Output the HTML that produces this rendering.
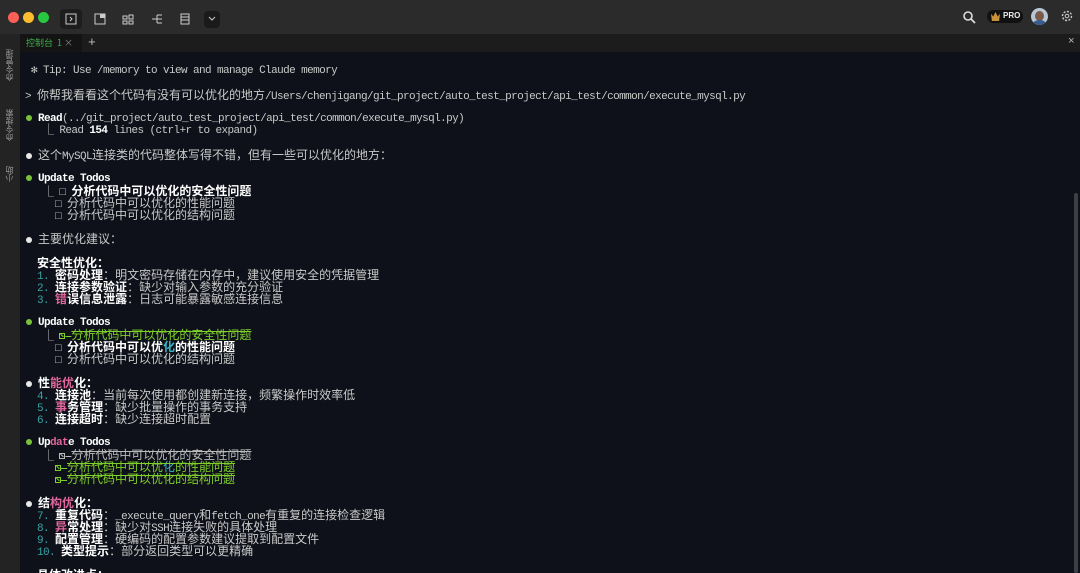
<!DOCTYPE html>
<html><head><meta charset="utf-8"><style>
*{margin:0;padding:0;box-sizing:border-box}
html,body{width:1080px;height:573px;overflow:hidden;background:#0e1119}
body{position:relative;font-family:"Liberation Mono","DejaVu Sans Mono",monospace;font-size:10px;color:#c9c9c9}
.top{position:absolute;left:0;top:0;width:1080px;height:34px;background:#2b2b2b}
.tl{position:absolute;top:12px;width:11px;height:11px;border-radius:50%}
.tb{position:absolute;top:9px;width:22px;height:20px;border-radius:4px}
.tabs{position:absolute;left:20px;top:34px;width:1060px;height:18px;background:#1c1c1c}
.side{position:absolute;left:0;top:34px;width:20px;height:539px;background:#232323}
.vt{position:absolute;left:4px;font-family:"Noto Sans CJK SC",sans-serif;font-size:8px;line-height:11px;color:#999;writing-mode:vertical-rl;transform:rotate(180deg)}
.term{position:absolute;left:25px;top:65px;line-height:12px;font-size:11px;letter-spacing:-0.6px}
.term div{height:12px;white-space:pre}
.c{font-family:"Noto Sans CJK SC",sans-serif;font-size:12px;line-height:12px;letter-spacing:0}
b{color:#fff;font-weight:bold}
.dot{display:inline-block;width:6px;height:6px;border-radius:50%;background:#e8e8e8;vertical-align:0px;margin:0 0 0 1px}
.g{background:#79c23a}
.n{color:#38a3a5}
.p{color:#e0669c}
.s{text-decoration:line-through;color:#7fd02a}
.sw{text-decoration:line-through;color:#bbb}
.cy{color:#38b6c8}
.cb{display:inline-block;width:6px;height:6px;border:1px solid currentColor;vertical-align:0;position:relative}
.cb:after{content:"";position:absolute;left:0;top:1px;width:4px;height:1px;background:currentColor;transform:rotate(45deg)}
</style></head><body>
<div class="top">
<div class="tl" style="left:8px;background:#fe5f57"></div>
<div class="tl" style="left:23px;background:#febc2e"></div>
<div class="tl" style="left:38px;background:#28c840"></div>
<div class="tb" style="left:60px;background:#1d1d1d"></div>
<svg style="position:absolute;left:65px;top:13px" width="12" height="12"><rect x="1" y="1" width="10" height="10" fill="none" stroke="#ccc"/><path d="M5 4l2 2-2 2" stroke="#ccc" fill="none"/></svg>
<svg style="position:absolute;left:94px;top:13px" width="12" height="12"><rect x="1" y="1" width="10" height="10" fill="none" stroke="#ccc"/><rect x="6" y="1" width="5" height="4" fill="#ccc"/></svg>
<svg style="position:absolute;left:122px;top:13px" width="12" height="12"><path d="M1 3h4v3H1zM7 2h4v4H7zM1 8h4v3H1zM7 8h4v3H7z" fill="none" stroke="#ccc"/></svg>
<svg style="position:absolute;left:151px;top:13px" width="12" height="12"><path d="M1 6h5M6 2h5M6 6h5M6 10h5M6 2v8" stroke="#ccc" fill="none"/></svg>
<svg style="position:absolute;left:179px;top:13px" width="12" height="12"><rect x="2" y="1" width="8" height="10" fill="none" stroke="#ccc"/><path d="M2 4h8M2 7h8" stroke="#ccc"/></svg>
<div class="tb" style="left:204px;top:11px;width:16px;height:17px;background:#1a1a1a"></div>
<svg style="position:absolute;left:208px;top:16px" width="8" height="6"><path d="M1 1l3 3 3-3" stroke="#ccc" fill="none"/></svg>
<svg style="position:absolute;left:962px;top:10px" width="14" height="14"><circle cx="6" cy="6" r="4" stroke="#ddd" stroke-width="1.6" fill="none"/><path d="M9 9l4 4" stroke="#ddd" stroke-width="1.8"/></svg>
<div style="position:absolute;left:987px;top:10px;width:36px;height:13px;background:#111;border-radius:7px"></div>
<div style="position:absolute;left:991px;top:12px;width:9px;height:9px;background:#c9923a;clip-path:polygon(0 20%,25% 50%,50% 0,75% 50%,100% 20%,90% 100%,10% 100%)"></div>
<div style="position:absolute;left:1003px;top:11px;font-family:'Liberation Sans',sans-serif;font-size:8px;font-weight:bold;color:#eee">PRO</div>
<div style="position:absolute;left:1031px;top:8px;width:17px;height:17px;border-radius:50%;background:#b9c6d6;overflow:hidden"><div style="position:absolute;left:4px;top:3px;width:9px;height:10px;border-radius:50%;background:#7a5a48"></div><div style="position:absolute;left:2px;top:12px;width:13px;height:8px;border-radius:50%;background:#3b5c8a"></div></div>
<svg style="position:absolute;left:1061px;top:10px" width="12" height="12"><circle cx="6" cy="6" r="4.5" stroke="#ccc" stroke-width="1.4" fill="none" stroke-dasharray="2 1.5"/><circle cx="6" cy="6" r="1.8" stroke="#ccc" fill="none"/></svg>
</div>
<div class="side">
<div class="vt" style="top:15px">命令管理</div>
<div class="vt" style="top:75px">命令搜索</div>
<div class="vt" style="top:132px">小助</div>
</div>
<div class="tabs">
<div style="position:absolute;left:0;top:0;width:62px;height:18px;background:#141414"></div>
<div style="position:absolute;left:6px;top:3px;font-family:'Noto Sans CJK SC',sans-serif;font-size:9px;line-height:11px;color:#3fae4a">控制台&nbsp; 1 <span style="color:#888">×</span></div>
<div style="position:absolute;left:68px;top:1px;color:#bbb;font-size:13px">+</div>
<div style="position:absolute;left:1048px;top:2px;color:#bbb;font-size:11px">×</div>
</div>
<div style="position:absolute;left:1074px;top:193px;width:4px;height:380px;background:#3d3f46;border-radius:2px"></div>
<div class="term"><div> ✻ Tip: Use /memory to view and manage Claude memory</div><div></div><div>&gt; <span class="c">你帮我看看这个代码有没有可以优化的地方</span>/Users/chenjigang/git_project/auto_test_project/api_test/common/execute_mysql.py</div><div></div><div><span class="dot g"></span> <b>Read</b>(../git_project/auto_test_project/api_test/common/execute_mysql.py)</div><div>   ⎿ Read <b>154</b> lines (ctrl+r to expand)</div><div></div><div><span class="dot"></span> <span class="c">这个</span>MySQL<span class="c">连接类的代码整体写得不错，但有一些可以优化的地方：</span></div><div></div><div><span class="dot g"></span> <b>Update Todos</b></div><div>   ⎿ □ <b class="c">分析代码中可以优化的安全性问题</b></div><div>     □ <span class="c">分析代码中可以优化的性能问题</span></div><div>     □ <span class="c">分析代码中可以优化的结构问题</span></div><div></div><div><span class="dot"></span> <span class="c">主要优化建议：</span></div><div></div><div>  <b class="c">安全性优化：</b></div><div>  <span class="n">1.</span> <b class="c">密码处理</b><span class="c">：明文密码存储在内存中，建议使用安全的凭据管理</span></div><div>  <span class="n">2.</span> <b class="c">连接参数验证</b><span class="c">：缺少对输入参数的充分验证</span></div><div>  <span class="n">3.</span> <b class="c"><span class="p">错</span>误信息泄露</b><span class="c">：日志可能暴露敏感连接信息</span></div><div></div><div><span class="dot g"></span> <b>Update Todos</b></div><div>   ⎿ <span class="s"><span class="cb"></span> <span class="c">分析代码中可以优化的安全性问题</span></span></div><div>     □ <b class="c">分析代码中可以优<span class="cy">化</span>的性能问题</b></div><div>     □ <span class="c">分析代码中可以优化的结构问题</span></div><div></div><div><span class="dot"></span> <b class="c">性<span class="p">能优</span>化：</b></div><div>  <span class="n">4.</span> <b class="c">连接池</b><span class="c">：当前每次使用都创建新连接，频繁操作时效率低</span></div><div>  <span class="n">5.</span> <b class="c"><span class="p">事</span>务管理</b><span class="c">：缺少批量操作的事务支持</span></div><div>  <span class="n">6.</span> <b class="c">连接超时</b><span class="c">：缺少连接超时配置</span></div><div></div><div><span class="dot g"></span> <b>Up<span class="p">dat</span>e Todos</b></div><div>   ⎿ <span class="sw"><span class="cb"></span> <span class="c">分析代码中可以优化的安全性问题</span></span></div><div>     <span class="s"><span class="cb"></span> <span class="c">分析代码中可以优<span class="cy">化</span>的性能问题</span></span></div><div>     <span class="s"><span class="cb"></span> <span class="c">分析代码中可以优化的结构问题</span></span></div><div></div><div><span class="dot"></span> <b class="c">结<span class="p">构优</span>化：</b></div><div>  <span class="n">7.</span> <b class="c">重复代码</b><span class="c">：</span>_execute_query<span class="c">和</span>fetch_one<span class="c">有重复的连接检查逻辑</span></div><div>  <span class="n">8.</span> <b class="c"><span class="p">异</span>常处理</b><span class="c">：缺少对</span>SSH<span class="c">连接失败的具体处理</span></div><div>  <span class="n">9.</span> <b class="c">配置管理</b><span class="c">：硬编码的配置参数建议提取到配置文件</span></div><div>  <span class="n">10.</span> <b class="c">类型提示</b><span class="c">：部分返回类型可以更精确</span></div><div></div><div>  <b class="c">具体改进点：</b></div></div>
</body></html>
